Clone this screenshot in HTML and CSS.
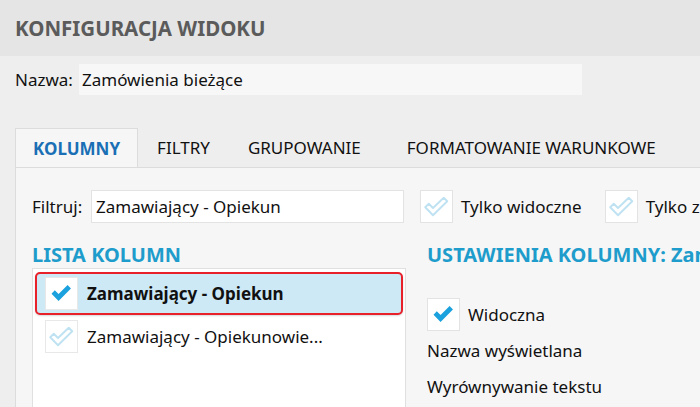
FILE: index.html
```html
<!DOCTYPE html>
<html lang="pl">
<head>
<meta charset="utf-8">
<link rel="stylesheet" href="styles.css">
</head>
<body>
<header class="top">
  <h1 class="title">KONFIGURACJA WIDOKU</h1>
</header>
<div class="name-row">
  <label class="name-label">Nazwa:</label>
  <div class="name-input">Zamówienia bieżące</div>
</div>
<nav class="tabs">
  <div class="tab active">KOLUMNY</div>
  <div class="tab">FILTRY</div>
  <div class="tab">GRUPOWANIE</div>
  <div class="tab tab-last">FORMATOWANIE WARUNKOWE</div>
</nav>
<main class="panel">
  <div class="filter-row">
    <span class="filter-label">Filtruj:</span>
    <div class="filter-input">Zamawiający - Opiekun</div>
    <span class="cb">
      <svg viewBox="0 0 20 16" class="chk light"><path d="M1 8.2 L3.8 5.4 L7.2 8.8 L15.8 0.6 L18.6 3.4 L7.2 14.6 Z"/></svg>
    </span>
    <span class="cb-label">Tylko widoczne</span>
    <span class="cb cb-second">
      <svg viewBox="0 0 20 16" class="chk light"><path d="M1 8.2 L3.8 5.4 L7.2 8.8 L15.8 0.6 L18.6 3.4 L7.2 14.6 Z"/></svg>
    </span>
    <span class="cb-label">Tylko zaznaczone</span>
  </div>
  <div class="columns">
    <section class="col-left">
      <h2 class="section-title">LISTA KOLUMN</h2>
      <div class="list">
        <div class="item selected">
          <span class="cb cb-item">
            <svg viewBox="0 0 20 16" class="chk solid"><path d="M0.5 8.2 L3.6 5 L7.2 8.4 L15.8 0 L19 3.2 L7.2 15.2 Z"/></svg>
          </span>
          <span class="item-text bold">Zamawiający - Opiekun</span>
        </div>
        <div class="item">
          <span class="cb cb-item">
            <svg viewBox="0 0 20 16" class="chk light"><path d="M1 8.2 L3.8 5.4 L7.2 8.8 L15.8 0.6 L18.6 3.4 L7.2 14.6 Z"/></svg>
          </span>
          <span class="item-text">Zamawiający - Opiekunowie...</span>
        </div>
      </div>
    </section>
    <section class="col-right">
      <h2 class="section-title">USTAWIENIA KOLUMNY: Zamawiający - Opiekun</h2>
      <div class="visible-row">
        <span class="cb">
          <svg viewBox="0 0 20 16" class="chk solid"><path d="M0.5 8.2 L3.6 5 L7.2 8.4 L15.8 0 L19 3.2 L7.2 15.2 Z"/></svg>
        </span>
        <span class="cb-label">Widoczna</span>
      </div>
      <div class="field">Nazwa wyświetlana</div>
      <div class="field">Wyrównywanie tekstu</div>
    </section>
  </div>
</main>
</body>
</html>
```
FILE: styles.css
```css
* { box-sizing: border-box; }
html, body { margin: 0; padding: 0; }
body {
  width: 700px;
  height: 407px;
  overflow: hidden;
  background: #eeeeee;
  font-family: "Noto Sans", "Open Sans", sans-serif;
  font-size: 17px;
  color: #111;
}
.top {
  height: 56px;
  background: #e5e5e5;
  padding-left: 15px;
  display: flex;
  align-items: center;
}
.title {
  margin: 0;
  font-size: 20.5px;
  font-weight: 700;
  color: #5b5b5b;
}
.name-row {
  display: flex;
  align-items: center;
  margin-top: 8px;
  padding-left: 15px;
  height: 31px;
}
.name-label { width: 64px; flex: none; }
.name-input {
  width: 503px;
  flex: none;
  height: 31px;
  background: #f7f7f7;
  padding-left: 3px;
  display: flex;
  align-items: center;
}
.tabs {
  display: flex;
  margin-top: 33px;
  padding-left: 15px;
  height: 39px;
  white-space: nowrap;
}
.tab {
  flex: none;
  padding: 0 19px;
  display: flex;
  align-items: center;
  font-size: 17px;
  color: #111;
}
.tab.active {
  background: #f6f6f6;
  border: 1px solid #dcdcdc;
  border-bottom: none;
  color: #1a6fb5;
  font-weight: 700;
  padding: 0 17px 0 17px;
}
.tab-last { margin-left: 8px; }
.panel {
  margin-left: 15px;
  background: #f6f6f6;
  border-top: 1px solid #dcdcdc;
  border-left: 1px solid #dcdcdc;
  height: 240px;
  padding: 22px 0 0 16px;
  overflow: hidden;
}
.filter-row {
  display: flex;
  align-items: center;
  height: 33px;
  white-space: nowrap;
}
.filter-label { width: 59px; flex: none; }
.filter-input {
  flex: none;
  width: 313px;
  height: 33px;
  background: #fff;
  border: 1px solid #e3e3e3;
  padding-left: 4px;
  display: flex;
  align-items: center;
  margin-right: 16px;
}
.cb {
  width: 33px;
  height: 33px;
  flex: none;
  background: #fff;
  border: 1px solid #e3e3e3;
  display: inline-flex;
  align-items: center;
  justify-content: center;
}
.cb-label { margin-left: 8px; flex: none; white-space: nowrap; }
.cb-second { margin-left: 23px; }
.chk { width: 21px; height: 17px; }
.chk.solid path { fill: #1ba1dd; }
.chk.light { width: 25px; height: 20px; margin-top: 1px; }
.chk.light path { fill: #fff; stroke: #bfe2f2; stroke-width: 1.5; stroke-linejoin: round; }
.columns {
  display: flex;
  margin-top: 18px;
}
.col-left { width: 374px; flex: none; }
.col-right { margin-left: 21px; white-space: nowrap; flex: none; }
.section-title {
  margin: 0;
  height: 27px;
  font-size: 20px;
  font-weight: 700;
  color: #1e9ccb;
  line-height: 27px;
  white-space: nowrap;
}
.list {
  background: #fff;
  border: 1px solid #e0e0e0;
  height: 160px;
  padding: 3px 2px 0 2px;
}
.item {
  height: 43px;
  display: flex;
  align-items: center;
  padding-left: 8px;
  border: 2px solid transparent;
  border-radius: 5px;
  white-space: nowrap;
}
.item.selected {
  background: #cde9f6;
  border-color: #e8202a;
  box-shadow: 0 1px 2px rgba(0,0,0,0.15);
}
.cb-item { border-color: #e8e8e8; }
.item-text { margin-left: 9px; }
.bold { font-weight: 700; }
.visible-row {
  display: flex;
  align-items: center;
  margin-top: 30px;
}
.field {
  margin-top: 5px;
  height: 30px;
  line-height: 30px;
}
.field + .field { margin-top: 6px; }
```
